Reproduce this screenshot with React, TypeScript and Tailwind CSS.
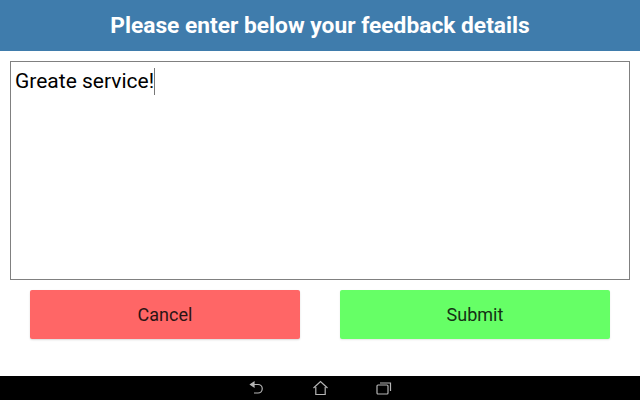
export default function App() {
  return (
    <div className="w-[640px] h-[400px] flex flex-col bg-white overflow-hidden font-['Roboto',sans-serif]">
      <div className="h-[51px] shrink-0 bg-[#3f7cac] flex items-center justify-center pt-[2px] text-white font-bold text-[22.75px] leading-none">
        Please enter below your feedback details
      </div>
      <div className="mx-[10px] mt-[10px] h-[219px] shrink-0 border border-[#808080] px-[4px] pt-[6px] flex items-start">
        <span className="text-[21px] leading-[27px] text-black">Greate service!</span>
        <span className="w-px h-[27px] bg-[#777] shrink-0"></span>
      </div>
      <div className="flex justify-between px-[30px] mt-[10px]">
        <button className="w-[270px] h-[49px] rounded-[2px] bg-[#ff6666] text-[#2a1414] text-[18px] shadow-[0_1px_2px_rgba(0,0,0,0.15)]">Cancel</button>
        <button className="w-[270px] h-[49px] rounded-[2px] bg-[#66ff66] text-[#143014] text-[18px] shadow-[0_1px_2px_rgba(0,0,0,0.1)]">Submit</button>
      </div>
      <div className="flex-1"></div>
      <div className="h-[24px] shrink-0 bg-black flex items-center justify-center relative">
        <svg className="absolute left-[249px] top-[5px]" width="15" height="15" viewBox="0 0 15 15" fill="none" stroke="#b5b5b5" strokeWidth="1.2">
          <path d="M1.5 3.5H9a4 4 0 0 1 0 8.5H5" />
          <path d="M1.5 3.5L5 1.2V5.8Z" fill="#b5b5b5" />
        </svg>
        <svg className="absolute left-[312px] top-[4px]" width="17" height="16" viewBox="0 0 17 16" fill="none" stroke="#b5b5b5" strokeWidth="1.2">
          <path d="M1.5 8L8.5 1.5L15.5 8" />
          <path d="M3.8 7V14.5H13.2V7" />
        </svg>
        <svg className="absolute left-[376px] top-[5px]" width="16" height="14" viewBox="0 0 16 14" fill="none" stroke="#b5b5b5" strokeWidth="1.2">
          <rect x="1" y="4" width="11" height="9" rx="1" />
          <path d="M4 2H14.5V10" />
        </svg>
      </div>
    </div>
  );
}
